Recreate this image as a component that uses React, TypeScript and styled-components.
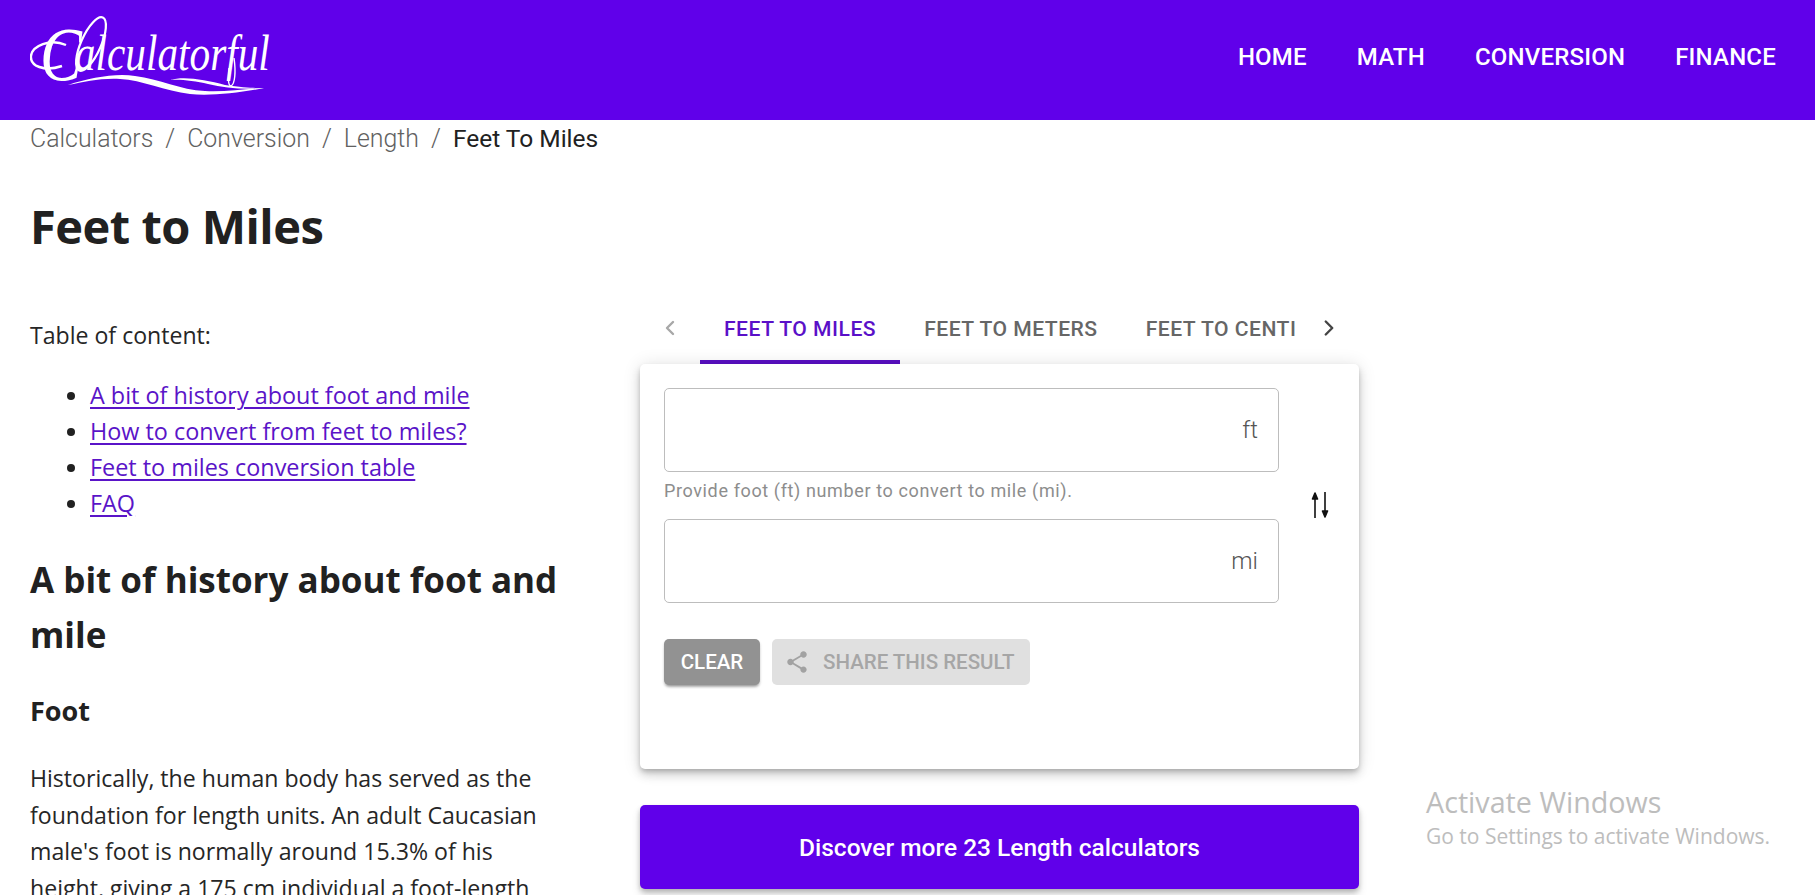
import React from "react";
import styled, { createGlobalStyle } from "styled-components";
import { ChevronLeft, ChevronRight } from "lucide-react";

const Global = createGlobalStyle`
  html, body { margin: 0; padding: 0; height: 895px; overflow: hidden; background: #fff; }
  * { box-sizing: border-box; }
  body { font-family: "Open Sans", "Noto Sans", sans-serif; color: #212121; }
`;

const Page = styled.div`
  position: relative;
  width: 1815px;
  height: 895px;
  overflow: hidden;
`;

const Header = styled.header`
  height: 120px;
  background: #6000ea;
  display: flex;
  align-items: center;
  justify-content: space-between;
  padding: 0 39px 0 30px;
`;

const LogoMark = styled.svg`
  display: block;
  width: 250px;
  height: 120px;
`;

const Nav = styled.nav`
  display: flex;
  gap: 50px;
  margin-top: -6px;
`;

const NavItem = styled.a`
  font: 500 24px Roboto, sans-serif;
  letter-spacing: 0.2px;
  color: #fff;
  text-transform: uppercase;
`;

const Crumbs = styled.div`
  display: flex;
  align-items: center;
  height: 36px;
  padding-left: 30px;
  font: 300 24.9px Roboto, sans-serif;
  color: #616161;
`;

const Sep = styled.span`
  margin: 0 12px;
`;

const Current = styled.span`
  color: #212121;
  font-weight: 400;
  font-size: 24.5px;
`;

const Title = styled.h1`
  margin: 42px 0 0 30px;
  font: 700 47px/56px "Open Sans", sans-serif;
  letter-spacing: -0.5px;
  height: 56px;
`;

const Columns = styled.main`
  display: grid;
  grid-template-columns: 640px 719px;
  margin-top: 63px;
`;

const Article = styled.article`
  padding-left: 30px;
  width: 570px;
`;

const Text = styled.p`
  margin: 0;
  font: 400 23.1px/36.4px "Open Sans", sans-serif;
  color: #262626;
`;

const Toc = styled.ul`
  margin: 24px 0 0;
  padding: 0 0 0 60px;
  li { font: 400 23.4px/36px "Open Sans", sans-serif; }
`;

const TocLink = styled.a`
  color: #5a14c8;
  text-decoration: underline;
  text-underline-offset: 3px;
`;

const H2 = styled.h2`
  margin: 31px 0 0;
  font: 700 35px/55px "Open Sans", sans-serif;
`;

const H3 = styled.h3`
  margin: 33px 0 0;
  font: 700 27px/32px "Open Sans", sans-serif;
`;

const Body = styled(Text)`
  margin-top: 33px;
`;

const Tool = styled.section`
  display: flex;
  flex-direction: column;
  margin-top: -17px;
`;

const TabRow = styled.div`
  display: flex;
  align-items: stretch;
  height: 64px;
  padding-left: 20px;
`;

const BackArrow = styled.div`
  width: 40px;
  display: flex;
  align-items: center;
  padding-bottom: 8px;
  margin-left: -2px;
  margin-right: 2px;
  color: #a8a8a8;
`;

const NextArrow = styled.div`
  width: 60px;
  display: flex;
  align-items: center;
  justify-content: center;
  padding: 0 0 8px 4px;
  color: #444;
`;

const TabScroll = styled.div`
  display: flex;
  width: 597px;
  overflow: hidden;
`;

const Tab = styled.div<{ $active?: boolean }>`
  flex: none;
  display: flex;
  align-items: center;
  padding: 0 24px 4px;
  height: 64px;
  font: 500 21.1px Roboto, sans-serif;
  letter-spacing: 0.5px;
  text-transform: uppercase;
  white-space: nowrap;
  color: ${(p) => (p.$active ? "#5a10c8" : "#666")};
  border-bottom: 4px solid ${(p) => (p.$active ? "#5a10c4" : "transparent")};
`;

const Card = styled.div`
  height: 405px;
  background: #fff;
  border-radius: 5px;
  box-shadow: 0 3px 5px -1px rgba(0,0,0,.2), 0 6px 10px 0 rgba(0,0,0,.14), 0 1px 18px 0 rgba(0,0,0,.12);
  padding: 24px;
`;

const FormRow = styled.div`
  display: flex;
  align-items: center;
`;

const Fields = styled.div`
  width: 615px;
`;

const Field = styled.div`
  height: 84px;
  border: 1px solid #bdbdbd;
  border-radius: 5px;
  display: flex;
  align-items: center;
  justify-content: flex-end;
  padding: 0 20px 0 0;
  font: 300 24px Roboto, sans-serif;
  color: #555;
`;

const Help = styled.div`
  height: 47px;
  padding-top: 9px;
  font: 400 18px/20px Roboto, sans-serif;
  letter-spacing: 0.62px;
  color: #8d8d8d;
`;

const Swap = styled.svg`
  display: block;
  margin: 19px 0 0 29px;
  width: 24px;
  height: 28px;
`;

const Actions = styled.div`
  display: flex;
  gap: 12px;
  margin-top: 36px;
`;

const Clear = styled.button`
  width: 96px;
  height: 46px;
  border: 0;
  border-radius: 5px;
  background: #929292;
  color: #fff;
  font: 500 20.5px Roboto, sans-serif;
  box-shadow: 0 3px 3px -2px rgba(0,0,0,.3), 0 2px 3px rgba(0,0,0,.2);
`;

const Share = styled.button`
  width: 258px;
  height: 46px;
  border: 0;
  border-radius: 5px;
  background: #e0e0e0;
  color: #a6a6a6;
  font: 500 20.5px Roboto, sans-serif;
  display: flex;
  align-items: center;
  gap: 13px;
  padding: 0 0 0 12px;
  white-space: nowrap;
`;

const Discover = styled.a`
  margin-top: 36px;
  height: 84px;
  border-radius: 5px;
  background: #6000ea;
  color: #fff;
  display: flex;
  align-items: center;
  justify-content: center;
  font: 500 24.5px Roboto, sans-serif;
  box-shadow: 0 3px 5px rgba(0,0,0,.22), 0 6px 10px rgba(0,0,0,.12);
`;

const Watermark = styled.div`
  position: absolute;
  left: 1426px;
  top: 782px;
  color: #bdbdbd;
  font-family: "Open Sans", sans-serif;
  pointer-events: none;
`;

const WatermarkTitle = styled.div`
  font-size: 28.7px;
  line-height: 40px;
`;

const WatermarkSub = styled.div`
  font-size: 21px;
  line-height: 28px;
`;

const Logo = () => (
  <LogoMark viewBox="0 0 250 120" aria-label="Calculatorful">
    <text transform="translate(10 80) scale(.826 1)" fill="#fff" fontFamily="Liberation Serif, serif" fontStyle="italic">
      <tspan fontSize="76">C</tspan>
      <tspan dx="-8.5" dy="-10" fontSize="50">alculatorful</tspan>
    </text>
    <path d="M36 45 C20 38 2 46 1 56 C0 66 14 72 32 66" fill="none" stroke="#fff" strokeWidth="2.4" />
    <ellipse cx="61" cy="44" rx="10" ry="29" transform="rotate(24 61 44)" fill="none" stroke="#fff" strokeWidth="2.2" />
    <path d="M38 85 C60 78 85 73 105 76 C130 79 150 90 175 91 C195 92 215 89 234 88 C210 93 180 96 160 94 C135 91 112 80 90 79 C70 78 55 82 38 85Z" fill="#fff" />
    <path d="M140 80 C155 76 175 80 195 85 C215 88 225 88 234 88 C215 90 195 88 178 84 C165 81 150 79 140 80Z" fill="#fff" />
    <path d="M199 68 C198 78 198 86 201 86 C205 84 206 72 204 58" fill="none" stroke="#fff" strokeWidth="1.4" />
  </LogoMark>
);

const SwapIcon = () => (
  <Swap viewBox="0 0 24 28">
    <path d="M7 27V4M4.5 8 7 2l2.5 6z" fill="#111" stroke="#111" strokeWidth="1.6" strokeLinejoin="round" />
    <path d="M17 1v23M14.5 20l2.5 6 2.5-6z" fill="#111" stroke="#111" strokeWidth="1.6" strokeLinejoin="round" />
  </Swap>
);

const ShareIcon = () => (
  <svg width="26" height="26" viewBox="0 0 24 24" fill="#a2a2a2">
    <path d="M18 16.08c-.76 0-1.44.3-1.96.77L8.91 12.7c.05-.23.09-.46.09-.7s-.04-.47-.09-.7l7.05-4.11c.54.5 1.25.81 2.04.81 1.66 0 3-1.34 3-3s-1.34-3-3-3-3 1.34-3 3c0 .24.04.47.09.7L8.04 9.81C7.5 9.31 6.79 9 6 9c-1.66 0-3 1.34-3 3s1.34 3 3 3c.79 0 1.5-.31 2.04-.81l7.12 4.16c-.05.21-.08.43-.08.65 0 1.61 1.31 2.92 2.92 2.92s2.92-1.31 2.92-2.92-1.31-2.92-2.92-2.92z" />
  </svg>
);

export default function App() {
  return (
    <Page>
      <Global />
      <Header>
        <Logo />
        <Nav>
          <NavItem>Home</NavItem>
          <NavItem>Math</NavItem>
          <NavItem>Conversion</NavItem>
          <NavItem>Finance</NavItem>
        </Nav>
      </Header>
      <Crumbs>
        <span>Calculators</span><Sep>/</Sep>
        <span>Conversion</span><Sep>/</Sep>
        <span>Length</span><Sep>/</Sep>
        <Current>Feet To Miles</Current>
      </Crumbs>
      <Title>Feet to Miles</Title>
      <Columns>
        <Article>
          <Text>Table of content:</Text>
          <Toc>
            <li><TocLink>A bit of history about foot and mile</TocLink></li>
            <li><TocLink>How to convert from feet to miles?</TocLink></li>
            <li><TocLink>Feet to miles conversion table</TocLink></li>
            <li><TocLink>FAQ</TocLink></li>
          </Toc>
          <H2>A bit of history about foot and mile</H2>
          <H3>Foot</H3>
          <Body>
            Historically, the human body has served as the foundation for length units. An adult Caucasian male's foot is normally around 15.3% of his height, giving a 175 cm individual a foot-length
          </Body>
        </Article>
        <Tool>
          <TabRow>
            <BackArrow><ChevronLeft size={24} strokeWidth={2.4} /></BackArrow>
            <TabScroll>
              <Tab $active>Feet to miles</Tab>
              <Tab>Feet to meters</Tab>
              <Tab>Feet to centimeters</Tab>
            </TabScroll>
            <NextArrow><ChevronRight size={26} strokeWidth={2.2} /></NextArrow>
          </TabRow>
          <Card>
            <FormRow>
              <Fields>
                <Field>ft</Field>
                <Help>Provide foot (ft) number to convert to mile (mi).</Help>
                <Field>mi</Field>
              </Fields>
              <SwapIcon />
            </FormRow>
            <Actions>
              <Clear>CLEAR</Clear>
              <Share><ShareIcon />SHARE THIS RESULT</Share>
            </Actions>
          </Card>
          <Discover>Discover more 23 Length calculators</Discover>
        </Tool>
      </Columns>
      <Watermark>
        <WatermarkTitle>Activate Windows</WatermarkTitle>
        <WatermarkSub>Go to Settings to activate Windows.</WatermarkSub>
      </Watermark>
    </Page>
  );
}
